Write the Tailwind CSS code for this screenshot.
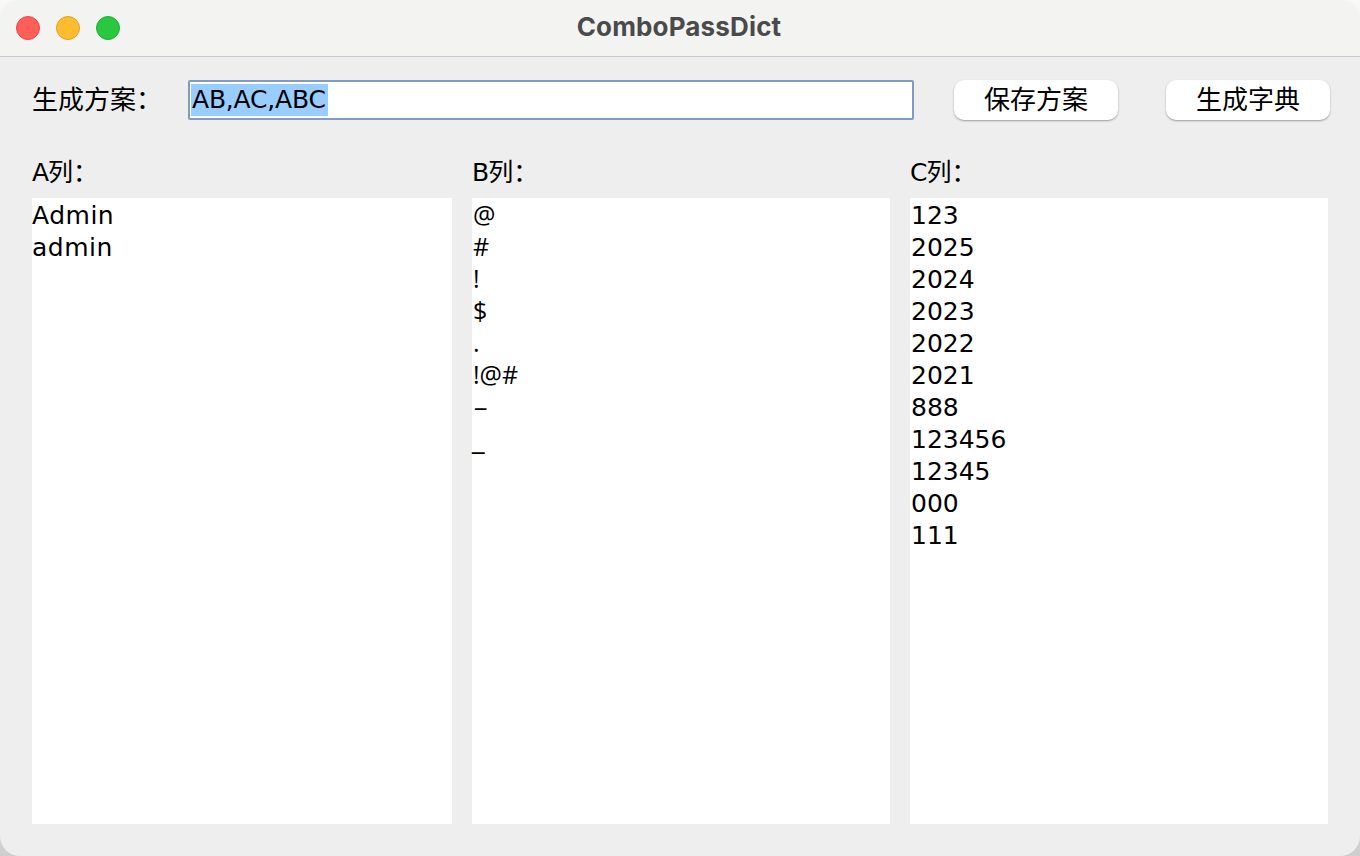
<!DOCTYPE html>
<html lang="zh">
<head>
<meta charset="utf-8">
<script src="https://cdn.jsdelivr.net/npm/@tailwindcss/browser@4"></script>
</head>
<body class="bg-linear-to-b from-[#f8f8f8] to-[#cfcfcf]">
<div class="w-[1360px] h-[856px] rounded-[20px] overflow-hidden bg-[#eeeeee] flex flex-col text-black font-['DejaVu_Sans','Noto_Sans_CJK_SC',sans-serif]">
  <div class="relative h-[57px] shrink-0 bg-[#f3f3f2] border-b border-[#c9c9c9] flex items-center justify-center">
    <div class="absolute left-[16px] top-[16px] flex gap-[16px]">
      <span class="w-[24px] h-[24px] rounded-full bg-[#ff5f57] border border-[#e5484d]"></span>
      <span class="w-[24px] h-[24px] rounded-full bg-[#febc2e] border border-[#e0a028]"></span>
      <span class="w-[24px] h-[24px] rounded-full bg-[#28c840] border border-[#22ad35]"></span>
    </div>
    <span class="font-['Inter',sans-serif] font-bold text-[26px] tracking-[0.15px] leading-none text-[#4a4a4a] relative top-[-1px] left-[-1px]">ComboPassDict</span>
  </div>
  <div class="flex items-center h-[40px] mt-[23px] pl-[32px] pr-[30px]">
    <span class="w-[156px] shrink-0 text-[26px] leading-none font-['Noto_Sans_CJK_SC',sans-serif] relative top-[-2px]">生成方案：</span>
    <div class="w-[726px] h-[40px] shrink-0 bg-white border-2 border-[#7f9cbc] rounded-[2px] flex items-center pl-[1px]">
      <span class="bg-[#99ccff] text-[25px] leading-[32px] pl-px pr-[2px] tracking-[-0.2px]">AB,AC,ABC</span>
    </div>
    <button class="ml-[40px] w-[164px] h-[40px] bg-white rounded-[10px] shadow-[0_1px_2px_rgba(0,0,0,0.35)] text-[26px] leading-none font-['Noto_Sans_CJK_SC',sans-serif]"><span class="relative top-[-2px]">保存方案</span></button>
    <button class="ml-[48px] w-[164px] h-[40px] bg-white rounded-[10px] shadow-[0_1px_2px_rgba(0,0,0,0.35)] text-[26px] leading-none font-['Noto_Sans_CJK_SC',sans-serif]"><span class="relative top-[-2px]">生成字典</span></button>
  </div>
  <div class="grid grid-cols-[420px_418px_418px] gap-x-[20px] pl-[32px] mt-[32px]">
    <div class="flex flex-col">
      <div class="h-[46px] text-[25px] leading-[36px]">A<span class="font-['Noto_Sans_CJK_SC',sans-serif] -ml-[1px]">列：</span></div>
      <div class="h-[626px] bg-white pt-[2px] text-[25px] leading-[32px] tracking-[0.5px]">
        <div>Admin</div><div>admin</div>
      </div>
    </div>
    <div class="flex flex-col">
      <div class="h-[46px] text-[25px] leading-[36px]">B<span class="font-['Noto_Sans_CJK_SC',sans-serif] -ml-[1px]">列：</span></div>
      <div class="h-[626px] bg-white pl-px text-[25px] leading-[32px] font-['Open_Sans',sans-serif]">
        <div>@</div><div>#</div><div>!</div><div>$</div><div>.</div><div>!@#</div><div><span class="inline-block scale-x-[1.9] origin-left">-</span></div><div class="h-[32px] -ml-px relative top-[2px] font-['DejaVu_Sans',sans-serif]">_</div>
      </div>
    </div>
    <div class="flex flex-col">
      <div class="h-[46px] text-[25px] leading-[36px]">C<span class="font-['Noto_Sans_CJK_SC',sans-serif] -ml-[1px]">列：</span></div>
      <div class="h-[626px] bg-white pt-[2px] pl-px text-[25px] leading-[32px]">
        <div>123</div><div>2025</div><div>2024</div><div>2023</div><div>2022</div><div>2021</div><div>888</div><div>123456</div><div>12345</div><div>000</div><div>111</div>
      </div>
    </div>
  </div>
</div>
</body>
</html>
